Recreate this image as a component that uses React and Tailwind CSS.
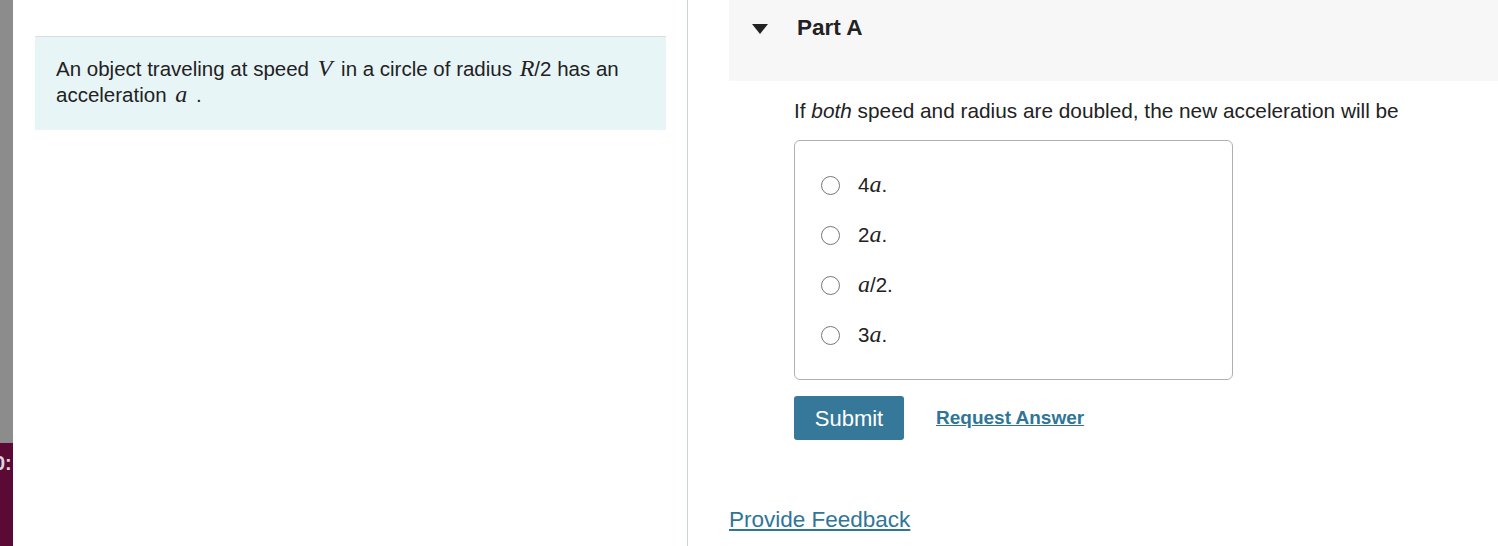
import React, { useState } from 'react';

const options = [
  { id: 'a', pre: '4', math: 'a', post: '.' },
  { id: 'b', pre: '2', math: 'a', post: '.' },
  { id: 'c', pre: '', math: 'a', post: '/2.' },
  { id: 'd', pre: '3', math: 'a', post: '.' },
];

const M = ({ children, className = '' }) => (
  <span className={`font-['Liberation_Serif',serif] italic text-[24px] leading-none ${className}`}>
    {children}
  </span>
);

const App = () => {
  const [choice, setChoice] = useState(null);

  return (
    <div className="flex h-[546px] w-full overflow-hidden bg-white font-['Liberation_Sans',Arial,sans-serif] text-[#222]">
      {/* left edge strip */}
      <div className="flex w-[13px] shrink-0 flex-col">
        <div className="h-[443px] bg-[#8c8c8c]" />
        <div className="flex-1 bg-[#5b0a36] pt-[10px]">
          <div className="-ml-[6px] text-[20px] font-bold leading-none text-[#ddd5da]">0:</div>
        </div>
      </div>

      {/* intro panel */}
      <div className="w-[675px] shrink-0 border-r border-[#cdd3dc] pt-[36px] pl-[22px] pr-[21px]">
        <div className="border-t border-[#dcdcdc] bg-[#e8f5f7] px-[21px] pt-[19px] pb-[22px] text-[20.5px] leading-[26px]">
          An object traveling at speed <M className="px-[3px]">V</M> in a circle of radius{' '}
          <M className="pl-[2px]">R</M>/2 has an acceleration <M className="px-[3px]">a</M> .
        </div>
      </div>

      {/* part panel */}
      <div className="flex-1 pl-[41px]">
        <div className="flex h-[81px] items-start bg-[#f7f7f7] pt-[15px]">
          <svg width="16" height="10" viewBox="0 0 16 10" className="ml-[23px] mt-[9px]">
            <path d="M0 0 L16 0 L8 10 Z" fill="#222" />
          </svg>
          <h2 className="ml-[29px] text-[22.5px] font-bold leading-[26px]">Part A</h2>
        </div>

        <div className="pl-[65px]">
          <p className="mt-[17px] text-[20.8px] leading-[26px]">
            If <em>both</em> speed and radius are doubled, the new acceleration will be
          </p>

          <div className="mt-[16px] w-[439px] rounded-[6px] border border-[#b0b0b0] py-[19px]">
            {options.map((o) => (
              <label key={o.id} className="flex h-[50px] cursor-pointer items-center pl-[26px]">
                <span
                  onClick={() => setChoice(o.id)}
                  className={`h-[19px] w-[19px] rounded-full border-[1.5px] border-[#777] bg-white ${choice === o.id ? 'ring-4 ring-inset ring-[#357a9a]' : ''}`}
                />
                <span className="ml-[18px] text-[20.5px] leading-[26px]">
                  {o.pre}
                  <M>{o.math}</M>
                  {o.post}
                </span>
              </label>
            ))}
          </div>

          <div className="mt-[16px] flex items-center">
            <button className="h-[44px] w-[110px] rounded-[3px] bg-[#367899] text-[22px] text-white">
              Submit
            </button>
            <a href="#" className="ml-[32px] text-[19px] font-bold text-[#2f7598] underline">
              Request Answer
            </a>
          </div>
        </div>

        <a href="#" className="mt-[67px] inline-block text-[22.5px] leading-[26px] text-[#2f7598] underline">
          Provide Feedback
        </a>
      </div>
    </div>
  );
};

export default App;
